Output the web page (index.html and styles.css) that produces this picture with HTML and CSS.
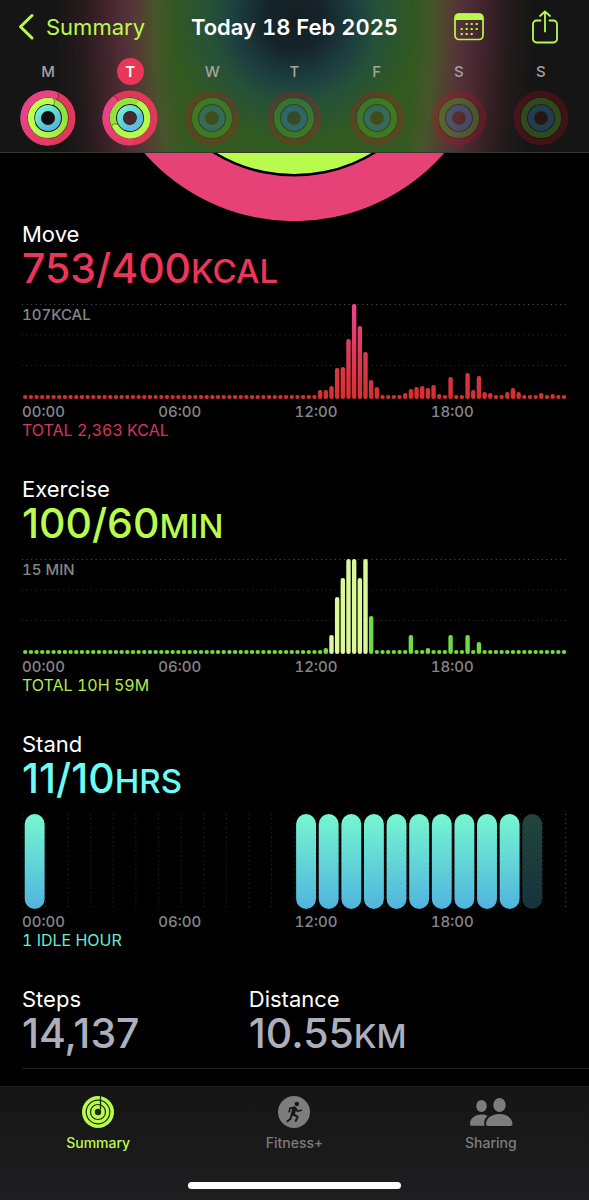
FILE: index.html
```html
<!DOCTYPE html>
<html lang="en">
<head>
<meta charset="utf-8">
<meta name="viewport" content="width=device-width, initial-scale=1">
<title>Today 18 Feb 2025</title>
<link rel="stylesheet" href="styles.css">
</head>
<body>
<svg class="defs" aria-hidden="true">
  <defs>
    <linearGradient id="move-fill" gradientUnits="userSpaceOnUse" x1="0" y1="0" x2="0" y2="95">
      <stop offset="0" stop-color="#ee4590"/><stop offset="0.5" stop-color="#dc3a58"/><stop offset="1" stop-color="#d5302c"/>
    </linearGradient>
    <linearGradient id="stand-fill" x1="0" y1="0" x2="0" y2="1">
      <stop offset="0" stop-color="#76f7d0"/><stop offset="1" stop-color="#50b4de"/>
    </linearGradient>
    <linearGradient id="ring-green" x1="1" y1="0.300" x2="0" y2="0.700">
      <stop offset="0" stop-color="#8fe03c"/><stop offset="1" stop-color="#bdff4e"/>
    </linearGradient>
    <linearGradient id="ring-cyan" x1="0" y1="0" x2="0.6" y2="1">
      <stop offset="0" stop-color="#74f2d6"/><stop offset="1" stop-color="#56bcd8"/>
    </linearGradient>
    <linearGradient id="ring-pink" gradientUnits="userSpaceOnUse" x1="0" y1="28" x2="0" y2="52">
      <stop offset="0" stop-color="#ea4286"/><stop offset="1" stop-color="#e33d66"/>
    </linearGradient>
    <symbol id="rings-idle" viewBox="0 0 56 56">
      <g fill="none">
        <circle cx="28" cy="28" r="13.500" stroke="#000" stroke-opacity=".25" stroke-width="1.500"/>
        <circle cx="28" cy="28" r="20.500" stroke="#000" stroke-opacity=".12" stroke-width="1.500"/>
        <circle cx="28" cy="28" r="24" stroke="#c8101e" stroke-opacity=".24" stroke-width="6.600"/>
        <circle cx="28" cy="28" r="17" stroke="#62b82c" stroke-opacity=".32" stroke-width="6.400"/>
        <circle cx="28" cy="28" r="10" stroke="#3d8ec0" stroke-opacity=".34" stroke-width="6.400"/>
        <circle cx="28" cy="28" r="6.800" fill="#7a1408" fill-opacity=".18"/>
      </g>
    </symbol>
  </defs>
</svg>
<div class="screen">
  <header class="top">
    <div class="nav">
      <button class="back" type="button">
        <svg width="17" height="28" viewBox="0 0 17 28"><path d="M14 2.500 2.500 13.700 14 25" fill="none" stroke="currentColor" stroke-width="3" stroke-linecap="round" stroke-linejoin="round"/></svg>
        <span>Summary</span>
      </button>
      <h1 class="title">Today 18 Feb 2025</h1>
      <div class="actions">
        <button type="button" aria-label="Calendar">
          <svg width="30" height="34" viewBox="0 0 30 34">
            <rect x="1" y="4" width="28" height="25.500" rx="4" fill="none" stroke="currentColor" stroke-width="1.700"/>
            <path d="M1 10V7.500a4 4 0 0 1 4-4h20a4 4 0 0 1 4 4V10z" fill="currentColor"/>
            <g fill="currentColor"><path d="M11.700 13h2v2h-2zM16.700 13h2v2h-2zM21.700 13h2v2h-2zM6.700 18h2v2h-2zM11.700 18h2v2h-2zM16.700 18h2v2h-2zM21.700 18h2v2h-2zM6.700 23h2v2h-2zM11.700 23h2v2h-2zM16.700 23h2v2h-2z"/></g>
          </svg>
        </button>
        <button type="button" aria-label="Share">
          <svg width="26" height="34" viewBox="0 0 26 34" fill="none" stroke="currentColor" stroke-width="1.800" stroke-linecap="round" stroke-linejoin="round">
            <path d="M8.500 10.500H4.500A3.500 3.500 0 0 0 1 14v15a3.500 3.500 0 0 0 3.500 3.500h17A3.500 3.500 0 0 0 25 29V14a3.500 3.500 0 0 0-3.500-3.500h-4M13 21.500V1.500M8 6l5-4.500L18 6"/>
          </svg>
        </button>
      </div>
    </div>
    <ol class="week">
      <li><span class="day">M</span>
        <svg class="rings" viewBox="0 0 56 56" fill="none" stroke-linecap="round">
          <circle cx="28" cy="28" r="24" fill="#101010"/>
          <circle cx="28" cy="28" r="24" stroke="#e0395a" stroke-width="7"/>
          <path d="M28 52A24 24 0 1 1 35.400 5.200" stroke="url(#ring-pink)" stroke-width="7"/>
          <path d="M37.500 3.200q2.500 2.500 .2 6" stroke="#8c1c3c" stroke-width="1"/>
          <circle cx="28" cy="28" r="17" stroke="url(#ring-green)" stroke-width="6"/>
          <path d="M12 33A17 17 0 0 1 32 11.500" stroke="#bdff4e" stroke-width="6"/>
          <path d="M33.800 9.200q2 2.500 0 5.500" stroke="#4f8a20" stroke-width="1"/>
          <circle cx="28" cy="28" r="10" stroke="url(#ring-cyan)" stroke-width="6"/>
        </svg></li>
      <li class="current"><span class="day">T</span>
        <svg class="rings" viewBox="0 0 56 56" fill="none" stroke-linecap="round">
          <circle cx="28" cy="28" r="24" fill="#241519"/>
          <circle cx="28" cy="28" r="24" stroke="#e03859" stroke-width="7"/>
          <path d="M28 52A24 24 0 0 1 12.300 9.800" stroke="url(#ring-pink)" stroke-width="7"/>
          <path d="M12 6.200q3.200 .5 3.600 3.800" stroke="#8c1c3c" stroke-width="1"/>
          <circle cx="28" cy="28" r="17" stroke="#94e23e" stroke-width="6"/>
          <path d="M38 14.300A17 17 0 1 1 13.800 37" stroke="#b6fb4b" stroke-width="6"/>
          <path d="M12 34A17 17 0 0 1 27 11" stroke="#94e23e" stroke-width="6" stroke-linecap="butt"/>
          <path d="M10.200 35q2-2.500 5.200-.8" stroke="#4f8a20" stroke-width="1"/>
          <circle cx="28" cy="28" r="10" stroke="url(#ring-cyan)" stroke-width="6"/>
          <path d="M37.900 27A10 10 0 0 1 28 38" stroke="#5abede" stroke-width="6"/>
          <circle cx="28" cy="28" r="6.500" fill="#49282f"/>
        </svg></li>
      <li><span class="day">W</span><svg class="rings"><use href="#rings-idle"/></svg></li>
      <li><span class="day">T</span><svg class="rings"><use href="#rings-idle"/></svg></li>
      <li><span class="day">F</span><svg class="rings"><use href="#rings-idle"/></svg></li>
      <li><span class="day">S</span><svg class="rings"><use href="#rings-idle"/></svg></li>
      <li><span class="day">S</span><svg class="rings"><use href="#rings-idle"/></svg></li>
    </ol>
  </header>

  <main>
    <svg class="hero" viewBox="0 0 400 68" aria-label="Activity rings">
      <circle cx="200" cy="-131" r="199" fill="#e74277"/>
      <circle cx="200" cy="-131" r="154.500" fill="#000"/>
      <circle cx="200" cy="-131" r="152" fill="#b9fb4c"/>
    </svg>

    <section class="metric move">
      <h2>Move</h2>
      <p class="value">753/400<span class="unit">KCAL</span></p>
      <div class="plot"><svg class="chart" data-chart="move"></svg><span class="scale">107KCAL</span></div>
      <div class="axis"><span>00:00</span><span>06:00</span><span>12:00</span><span>18:00</span></div>
      <p class="total">TOTAL 2,363 KCAL</p>
    </section>

    <section class="metric exercise">
      <h2>Exercise</h2>
      <p class="value">100/60<span class="unit">MIN</span></p>
      <div class="plot"><svg class="chart" data-chart="exercise"></svg><span class="scale">15 MIN</span></div>
      <div class="axis"><span>00:00</span><span>06:00</span><span>12:00</span><span>18:00</span></div>
      <p class="total">TOTAL 10H 59M</p>
    </section>

    <section class="metric stand">
      <h2>Stand</h2>
      <p class="value">11/10<span class="unit">HRS</span></p>
      <div class="plot"><svg class="chart" data-chart="stand"></svg></div>
      <div class="axis"><span>00:00</span><span>06:00</span><span>12:00</span><span>18:00</span></div>
      <p class="total">1 IDLE HOUR</p>
    </section>

    <section class="pair">
      <div><h2>Steps</h2><p class="value">14,137</p></div>
      <div><h2>Distance</h2><p class="value">10.55<span class="unit">KM</span></p></div>
    </section>
  </main>

  <nav class="tabs">
    <div class="tab-row">
      <button class="tab active" type="button">
        <svg width="32" height="32" viewBox="0 0 32 32">
          <circle cx="16" cy="16" r="16" fill="currentColor"/>
          <g fill="none" stroke="#1c2a12" stroke-width="1.200"><circle cx="16" cy="16" r="11.800"/><circle cx="16" cy="16" r="7.500"/></g>
          <circle cx="16" cy="16" r="3.200" fill="#1c2a12"/>
          <path d="M18.500 0v13.500" stroke="#1c2a12" stroke-width="1.300"/>
        </svg>
        <span>Summary</span>
      </button>
      <button class="tab" type="button">
        <svg width="32" height="32" viewBox="0 0 32 32">
          <circle cx="16" cy="16" r="16" fill="currentColor"/>
          <circle cx="18.800" cy="8" r="2.200" fill="#171717"/>
          <g fill="none" stroke="#171717" stroke-linecap="round" stroke-linejoin="round">
            <path d="M16.300 12.500 15 17.800" stroke-width="4"/>
            <path d="M15.500 11.700 12 12.200l-.8 3.500M17.800 12.500l1.700 2.800 3.800-1" stroke-width="1.700"/>
            <path d="M15.500 18.500l4.200 2.300-2 4.200M13.800 18.500l-1.300 4.200-3 2.600" stroke-width="2"/>
          </g>
        </svg>
        <span>Fitness+</span>
      </button>
      <button class="tab" type="button">
        <svg width="44" height="32" viewBox="0 0 44 32" fill="currentColor">
          <ellipse cx="12.500" cy="10" rx="5.300" ry="6"/>
          <ellipse cx="30.500" cy="9" rx="6.200" ry="7"/>
          <path d="M1 28C1 22.500 6 18.500 12.500 18.500c2.500 0 4.200.5 6 1.400-2.300 2-3.500 4.700-3.400 7.700 0 .8.200 1.600.5 2.200H3c-1.300 0-2-.6-2-1.800z"/>
          <path d="M17 28c0-5.700 6-10 13.300-10s13.200 4.300 13.200 10c0 1.200-.8 1.900-2.200 1.900H19.200c-1.400 0-2.200-.7-2.200-1.900z"/>
        </svg>
        <span>Sharing</span>
      </button>
    </div>
    <div class="home-bar"></div>
  </nav>
</div>
<script src="charts.js"></script>
</body>
</html>
```

FILE: styles.css
```css
* { box-sizing: border-box; }

body {
  margin: 0;
  background: #000;
  color: #fff;
  font-family: Inter, "Noto Sans", sans-serif;
  font-variant-numeric: tabular-nums;
}

h1, h2, p, ol { margin: 0; padding: 0; }
h1, h2 { font-weight: 400; }
ol { list-style: none; }
svg { display: block; }

button {
  padding: 0;
  border: 0;
  background: none;
  color: inherit;
  font: inherit;
}

.defs { position: absolute; width: 0; height: 0; }

.screen {
  display: flex;
  flex-direction: column;
  min-height: 100vh;
}

/* Header: navigation row and week strip over the blurred activity rings */
.top {
  border-bottom: 1px solid #33382e;
  background:
    radial-gradient(ellipse 125px 125px at 50% 20px,
      #141e21 0, #15242a 24%, #1d4040 50%, rgba(35, 80, 60, 0.85) 68%, rgba(48, 90, 36, 0) 100%),
    radial-gradient(ellipse 240px 560px at 50% 20px,
      #305c22 0, #33591f 50%, #46552a 58%, #543c33 65%, #522f38 71%,
      #40232b 79%, #241a1c 89%, #151515 100%);
}

.nav {
  display: grid;
  grid-template-columns: 1fr auto 1fr;
  align-items: center;
  height: 54px;
  padding: 0 18px;
}

.back {
  display: flex;
  align-items: center;
  gap: 11px;
  color: #b9fb4c;
  font-size: 22px;
  line-height: 28px;
}

.title {
  font-size: 22px;
  font-weight: 600;
  line-height: 28px;
}

.actions {
  display: flex;
  justify-content: flex-end;
  gap: 48px;
  padding-right: 13px;
  color: #b9fb4c;
}

.week {
  display: grid;
  grid-template-columns: repeat(7, 1fr);
  padding: 4px 7px 6px;
}

.week li {
  display: flex;
  flex-direction: column;
  align-items: center;
  gap: 5px;
}

.day {
  width: 27px;
  height: 27px;
  border-radius: 50%;
  color: #a3a3a3;
  font-size: 15px;
  font-weight: 500;
  line-height: 27px;
  text-align: center;
}

.current .day {
  background: #ec3658;
  color: #fff;
  font-weight: 600;
}

.rings { width: 56px; height: 56px; }

.hero {
  width: 68%;
  margin: 0 auto;
}

/* Metrics */
.metric { padding: 0 22px 38px; }

h2 {
  font-size: 22px;
  line-height: 27px;
}

.value {
  font-size: 41px;
  font-weight: 500;
  font-variant-numeric: normal;
  line-height: 40px;
}

.unit {
  font-size: 33px;
  line-height: 1;
}

.plot {
  position: relative;
  margin-top: 16px;
}

.chart {
  width: 100%;
  height: 95px;
  overflow: visible;
}

.scale {
  position: absolute;
  top: 1px;
  left: 0;
}

.scale, .axis {
  color: #86868a;
  font-size: 15px;
  font-weight: 500;
  line-height: 20px;
}

.axis {
  display: grid;
  grid-template-columns: repeat(4, 1fr);
  padding-top: 3px;
}

.total {
  font-size: 16px;
  line-height: 16px;
}

.move .value { color: #ec3658; }
.move .total { color: #d8355c; }
.exercise .value { color: #b9fb4c; }
.exercise .total { color: #b0ec4c; }
.stand .value { color: #6cfcf4; }
.stand .total { color: #6ee8d2; }

.bar-move { fill: url(#move-fill); }
.bar-exercise { fill: #6fdc44; }
.bar-exercise.peak { fill: #dcf99a; }
.bar-stand { fill: url(#stand-fill); }
.bar-stand.idle { opacity: 0.28; }

.guide {
  stroke: #323234;
  stroke-dasharray: 1 3.6;
}
.guide.strong { stroke: #59595c; }

.pair {
  display: grid;
  grid-template-columns: 2fr 3fr;
  margin-left: 22px;
  padding-bottom: 15px;
  border-bottom: 1px solid #1c1c1e;
}

.pair .value { color: #adb0bc; }

/* Tab bar */
.tabs {
  display: flex;
  flex-direction: column;
  justify-content: space-between;
  align-items: center;
  height: 114px;
  margin-top: auto;
  padding: 9px 0 11px;
  border-top: 1px solid #1f1f20;
  background: linear-gradient(to bottom, #151515, #1e1e20);
}

.tab-row {
  display: grid;
  grid-template-columns: repeat(3, 1fr);
  width: 100%;
}

.tab {
  display: flex;
  flex-direction: column;
  align-items: center;
  gap: 6px;
  color: #7d7d7d;
  font-size: 14px;
  font-weight: 500;
  line-height: 18px;
}

.tab.active { color: #b9fb4c; }

.home-bar {
  width: 36%;
  height: 7px;
  border-radius: 4px;
  background: #fff;
}
```

FILE: charts.js
```js
const NS = "http://www.w3.org/2000/svg";
const HEIGHT = 95;

function add(svg, name, attrs) {
  const el = document.createElementNS(NS, name);
  for (const key in attrs) el.setAttribute(key, attrs[key]);
  svg.appendChild(el);
}

// Quarter-hour bars; slots that are not listed stay at the baseline.
const move = {
  52: 9, 53: 9, 54: 13, 55: 31, 56: 32, 57: 60, 58: 95, 59: 73, 60: 47,
  61: 19, 62: 12, 67: 6, 68: 10, 69: 12, 70: 13, 71: 11, 72: 14, 73: 5,
  75: 22, 78: 26, 79: 9, 80: 23, 81: 7, 82: 6, 85: 7, 86: 11, 87: 7,
  91: 6, 93: 5
};
const exercise = {
  53: 6, 54: 19, 55: 57, 56: 76, 57: 95, 58: 95, 59: 76, 60: 95, 61: 38,
  68: 19, 71: 6, 75: 19, 78: 19, 80: 12
};
const standHours = [0, 12, 13, 14, 15, 16, 17, 18, 19, 20, 21, 22];

function quarterChart(name, data, isPeak) {
  const svg = document.querySelector(`[data-chart=${name}]`);
  [0.5, 31, 61.5].forEach((y, i) =>
    add(svg, "line", { x1: 0, x2: "100%", y1: y, y2: y, class: i ? "guide" : "guide strong" }));
  for (let i = 0; i < 96; i++) {
    const h = data[i] || 4;
    add(svg, "rect", {
      x: (i + 0.18) / 96 * 99.9 + "%", y: HEIGHT - h, width: 4.4, height: h, rx: 2.1,
      class: `bar-${name}${isPeak(i) ? " peak" : ""}`
    });
  }
}

quarterChart("move", move, () => false);
quarterChart("exercise", exercise, i => i >= 54 && i <= 60);

const stand = document.querySelector("[data-chart=stand]");
const HOUR = 99.6 / 24;
for (let h = 0; h <= 24; h++) {
  const x = h * HOUR + 0.15 + "%";
  add(stand, "line", { x1: x, x2: x, y1: 0, y2: HEIGHT, class: h === 24 ? "guide strong" : "guide" });
}
for (const h of standHours) {
  add(stand, "rect", {
    x: (h + 0.12) * HOUR + "%", y: 0, width: "3.650%", height: HEIGHT, rx: 10,
    class: h === 22 ? "bar-stand idle" : "bar-stand"
  });
}
```
